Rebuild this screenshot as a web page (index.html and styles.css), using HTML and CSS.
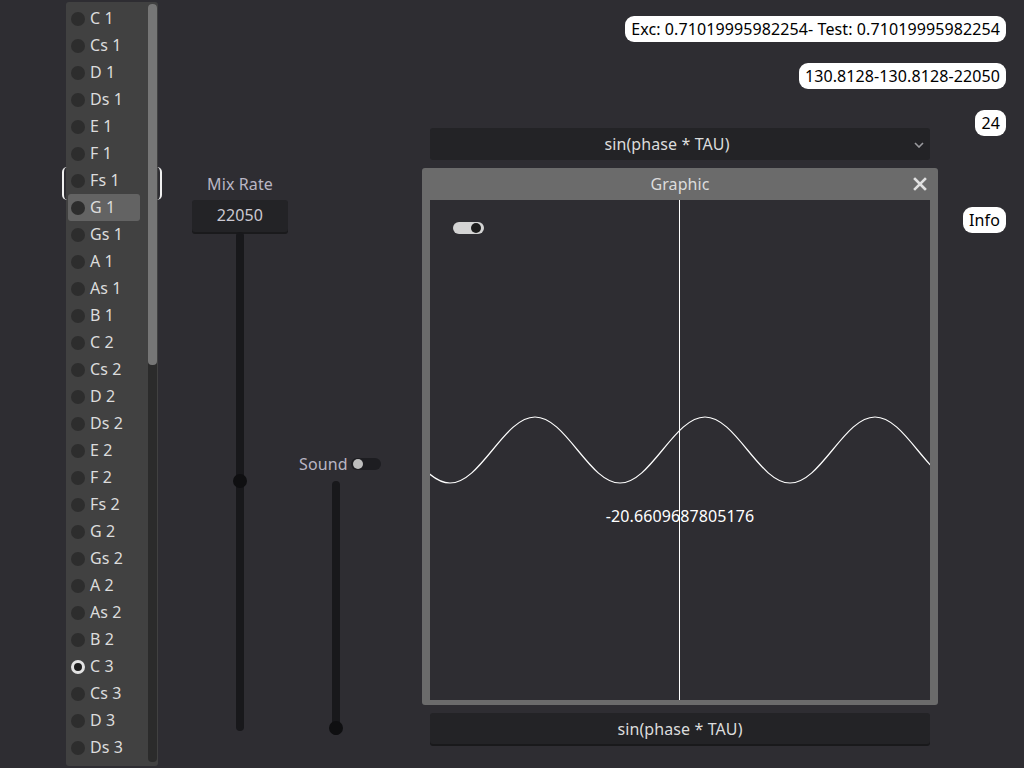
FILE: index.html
```html
<!DOCTYPE html>
<html>
<head>
<meta charset="utf-8">
<link rel="stylesheet" href="styles.css">
</head>
<body>
<div class="list-wrap">
  <div class="list">
    <div class="rows">
      <div class="row"><span class="radio"></span>C 1</div>
      <div class="row"><span class="radio"></span>Cs 1</div>
      <div class="row"><span class="radio"></span>D 1</div>
      <div class="row"><span class="radio"></span>Ds 1</div>
      <div class="row"><span class="radio"></span>E 1</div>
      <div class="row"><span class="radio"></span>F 1</div>
      <div class="row"><span class="radio"></span>Fs 1</div>
      <div class="row selected"><span class="radio"></span>G 1</div>
      <div class="row"><span class="radio"></span>Gs 1</div>
      <div class="row"><span class="radio"></span>A 1</div>
      <div class="row"><span class="radio"></span>As 1</div>
      <div class="row"><span class="radio"></span>B 1</div>
      <div class="row"><span class="radio"></span>C 2</div>
      <div class="row"><span class="radio"></span>Cs 2</div>
      <div class="row"><span class="radio"></span>D 2</div>
      <div class="row"><span class="radio"></span>Ds 2</div>
      <div class="row"><span class="radio"></span>E 2</div>
      <div class="row"><span class="radio"></span>F 2</div>
      <div class="row"><span class="radio"></span>Fs 2</div>
      <div class="row"><span class="radio"></span>G 2</div>
      <div class="row"><span class="radio"></span>Gs 2</div>
      <div class="row"><span class="radio"></span>A 2</div>
      <div class="row"><span class="radio"></span>As 2</div>
      <div class="row"><span class="radio"></span>B 2</div>
      <div class="row"><span class="radio checked"></span>C 3</div>
      <div class="row"><span class="radio"></span>Cs 3</div>
      <div class="row"><span class="radio"></span>D 3</div>
      <div class="row"><span class="radio"></span>Ds 3</div>
    </div>
    <div class="scrollbar"><div class="thumb"></div></div>
  </div>
  <div class="focus-bracket"></div>
</div>

<div class="mix">
  <div class="caption">Mix Rate</div>
  <div class="spin">22050</div>
  <div class="vslider tall"><span class="grab" style="top:242px"></span></div>
</div>

<div class="sound">
  <div class="sound-row">
    <span class="caption">Sound</span>
    <span class="switch off"><span class="knob"></span></span>
  </div>
  <div class="vslider short"><span class="grab" style="top:240px"></span></div>
</div>

<div class="stage">
  <div class="infos">
    <div class="bubble">Exc: 0.71019995982254- Test: 0.71019995982254</div>
    <div class="bubble">130.8128-130.8128-22050</div>
    <div class="bubble">24</div>
  </div>
  <div class="main">
    <div class="option top">
      <span>sin(phase * TAU)</span>
      <svg class="chev" width="10" height="6" viewBox="0 0 10 6"><polyline points="1,1 5,5 9,1" fill="none" stroke="#9a9a9e" stroke-width="1.6"/></svg>
    </div>
    <div class="window">
      <div class="titlebar">
        <span>Graphic</span>
        <svg class="close" width="14" height="14" viewBox="0 0 14 14"><path d="M2 2 L12 12 M12 2 L2 12" stroke="#e0e0e0" stroke-width="2.6" stroke-linecap="square"/></svg>
      </div>
      <div class="canvas">
        <span class="switch on"><span class="knob"></span></span>
        <svg class="wave" width="500" height="500" viewBox="0 0 500 500">
          <path fill="none" stroke="#ffffff" stroke-width="1.2" d="M -107.5 250
            c 13.86 -16.9 27.14 -33 42.5 -33 c 15.36 0 28.64 16.1 42.5 33 c 13.86 16.9 27.14 33 42.5 33 c 15.36 0 28.64 -16.1 42.5 -33
            c 13.86 -16.9 27.14 -33 42.5 -33 c 15.36 0 28.64 16.1 42.5 33 c 13.86 16.9 27.14 33 42.5 33 c 15.36 0 28.64 -16.1 42.5 -33
            c 13.86 -16.9 27.14 -33 42.5 -33 c 15.36 0 28.64 16.1 42.5 33 c 13.86 16.9 27.14 33 42.5 33 c 15.36 0 28.64 -16.1 42.5 -33
            c 13.86 -16.9 27.14 -33 42.5 -33 c 15.36 0 28.64 16.1 42.5 33 c 13.86 16.9 27.14 33 42.5 33 c 15.36 0 28.64 -16.1 42.5 -33"/>
          <line x1="249.5" y1="0" x2="249.5" y2="500" stroke="#ffffff" stroke-width="1"/>
        </svg>
        <div class="value">-20.6609687805176</div>
      </div>
    </div>
    <div class="option bottom"><span>sin(phase * TAU)</span></div>
  </div>
  <div class="side">
    <div class="bubble">Info</div>
  </div>
</div>
</body>
</html>
```
FILE: styles.css
```css
html, body {
  margin: 0;
  padding: 0;
  height: 768px;
  overflow: hidden;
}
body {
  background: #2e2d32;
  font-family: "Noto Sans", "DejaVu Sans", sans-serif;
  font-size: 16px;
  letter-spacing: 0.1px;
  color: #dcdcdc;
  display: flex;
  align-items: flex-start;
}

/* item list */
.list-wrap {
  position: relative;
  margin: 2px 0 0 66px;
}
.list {
  width: 92px;
  height: 764px;
  background: #414141;
  border-radius: 3px;
  display: flex;
  overflow: hidden;
  box-sizing: border-box;
  padding-right: 1px;
}
.rows {
  width: 72px;
  padding: 3px 0 0 2px;
  flex: none;
}
.row {
  height: 27px;
  line-height: 27px;
  display: flex;
  align-items: center;
  gap: 5px;
  padding-left: 3px;
  border-radius: 3px;
  color: #dcdcdc;
  white-space: nowrap;
}
.row.selected {
  background: #636363;
}
.radio {
  width: 14px;
  height: 14px;
  border-radius: 50%;
  background: #2d2d2d;
  flex: none;
  box-sizing: border-box;
}
.radio.checked {
  background: #1d1d1d;
  border: 3px solid #e2e2e2;
}
.scrollbar {
  margin: 2px 0 4px 8px;
  width: 9px;
  background: #2b2b2b;
  border-radius: 4px;
  flex: none;
  height: 758px;
}
.thumb {
  height: 361px;
  background: #767676;
  border-radius: 4px;
}
.focus-bracket {
  position: absolute;
  left: -4px;
  top: 165px;
  width: 100px;
  height: 33px;
  border-left: 2px solid #f0f0f0;
  border-right: 2px solid #f0f0f0;
  border-radius: 5px;
  box-sizing: border-box;
}

/* mix rate column */
.caption {
  color: #b9b6c4;
  white-space: nowrap;
}
.mix {
  margin: 173px 0 0 34px;
  width: 96px;
  display: flex;
  flex-direction: column;
  align-items: center;
}
.mix .caption {
  height: 22px;
  line-height: 22px;
  margin-bottom: 5px;
}
.spin {
  width: 96px;
  height: 32px;
  line-height: 31px;
  text-align: center;
  background: #232326;
  border-radius: 3px;
  color: #cbc9d2;
  box-shadow: 0 2px 0 #1a1a1c;
  box-sizing: border-box;
}
.vslider {
  position: relative;
  width: 8px;
  background: #18181b;
  border-radius: 4px;
}
.vslider.tall {
  height: 499px;
}
.vslider.short {
  height: 254px;
  margin-left: 33px;
}
.grab {
  position: absolute;
  left: -3px;
  width: 14px;
  height: 14px;
  border-radius: 50%;
  background: #0f0f11;
}

/* sound column */
.sound {
  margin: 453px 0 0 11px;
  width: 82px;
  display: flex;
  flex-direction: column;
}
.sound-row {
  display: flex;
  align-items: center;
  gap: 3px;
  height: 22px;
  margin-bottom: 6px;
}
.switch {
  position: relative;
  display: inline-block;
  width: 31px;
  height: 12px;
  border-radius: 6px;
}
.switch.off {
  background: #1d1d21;
}
.switch.off .knob {
  position: absolute;
  left: 2px;
  top: 1px;
  width: 10px;
  height: 10px;
  border-radius: 50%;
  background: #bdbdbd;
}
.switch.on {
  background: #d4d4d4;
}
.switch.on .knob {
  position: absolute;
  right: 3px;
  top: 1px;
  width: 10px;
  height: 10px;
  border-radius: 50%;
  background: #1c1c1c;
}

/* stage */
.stage {
  margin-left: 41px;
  flex: 1;
  display: grid;
  grid-template-columns: 516px 1fr;
  grid-template-rows: 128px auto;
}
.infos {
  grid-column: 1 / -1;
  display: flex;
  flex-direction: column;
  align-items: flex-end;
  gap: 21px;
  padding: 16px 18px 0 0;
}
.bubble {
  background: #ffffff;
  color: #000000;
  height: 26px;
  line-height: 26px;
  padding: 0 6px;
  border-radius: 9px;
  white-space: nowrap;
}
.side {
  display: flex;
  justify-content: flex-end;
  padding: 79px 18px 0 0;
  align-items: flex-start;
}
.main {
  display: flex;
  flex-direction: column;
}
.option {
  position: relative;
  margin: 0 8px;
  height: 32px;
  background: #232326;
  border-radius: 3px;
  display: flex;
  align-items: center;
  justify-content: center;
  color: #dcdcdc;
  box-sizing: border-box;
}
.option.top {
  padding-right: 26px;
}
.option.bottom {
  height: 31px;
  margin-top: 8px;
  box-shadow: 0 2px 0 #19191b;
}
.chev {
  position: absolute;
  right: 6px;
  top: 14px;
}
.window {
  margin-top: 8px;
  background: #6b6b6b;
  border-radius: 3px;
  padding: 0 8px 5px 8px;
}
.titlebar {
  position: relative;
  height: 32px;
  display: flex;
  align-items: center;
  justify-content: center;
  color: #dcdcdc;
}
.close {
  position: absolute;
  right: 3px;
  top: 9px;
}
.canvas {
  position: relative;
  width: 500px;
  height: 500px;
  background: #2e2d32;
  overflow: hidden;
}
.canvas .switch {
  position: absolute;
  left: 23px;
  top: 22px;
}
.wave {
  position: absolute;
  left: 0;
  top: 0;
}
.value {
  position: absolute;
  left: 0;
  right: 0;
  top: 305px;
  text-align: center;
  color: #ffffff;
  line-height: 22px;
}
```
